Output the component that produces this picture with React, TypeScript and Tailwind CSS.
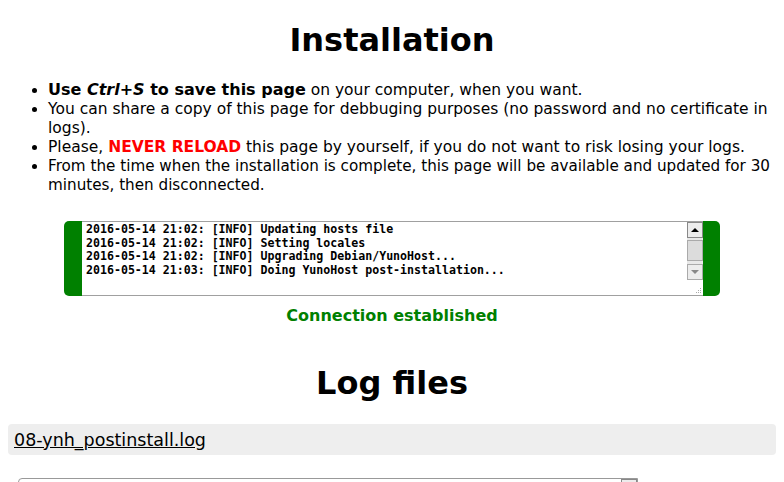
const LOG_LINES = [
  "2016-05-14 21:02: [INFO] Updating hosts file",
  "2016-05-14 21:02: [INFO] Setting locales",
  "2016-05-14 21:02: [INFO] Upgrading Debian/YunoHost...",
  "2016-05-14 21:03: [INFO] Doing YunoHost post-installation...",
];

function Scrollbar({ thumb = true }: { thumb?: boolean }) {
  return (
    <div className="flex h-full w-[16px] flex-col bg-[#e8e8e8]">
      <div className="flex h-[16px] items-center justify-center border border-[#888] bg-[#ececec]">
        <span className="h-0 w-0 border-x-[4px] border-b-[4px] border-x-transparent border-b-black" />
      </div>
      {thumb && (
        <div className="mt-[2px] h-[21px] border border-[#aaa] bg-[#dcdcdc]" />
      )}
      <div className="flex-1" />
      <div className="flex h-[16px] items-center justify-center border border-[#aaa] bg-[#ececec]">
        <span className="h-0 w-0 border-x-[4px] border-t-[4px] border-x-transparent border-t-[#888]" />
      </div>
    </div>
  );
}

export default function App() {
  return (
    <div className="min-h-screen bg-white px-2 font-['DejaVu_Sans',sans-serif] text-black">
      {/* installation */}
      <h1 className="pt-[22px] text-center text-[32px] font-bold leading-[37px]">
        Installation
      </h1>

      <ul className="mt-[21px] list-disc pl-[40px] text-[15.5px] leading-[19px]">
        <li>
          <b className="text-[16px]">
            Use <i>Ctrl+S</i> to save this page
          </b>{" "}
          on your computer, when you want.
        </li>
        <li>
          You can share a copy of this page for debbuging purposes (no password
          and no certificate in logs).
        </li>
        <li>
          Please, <b className="text-[#ff0000]">NEVER RELOAD</b> this page by
          yourself, if you do not want to risk losing your logs.
        </li>
        <li className="text-[15.2px]">
          From the time when the installation is complete, this page will be
          available and updated for 30 minutes, then disconnected.
        </li>
      </ul>

      {/* live log */}
      <div className="mx-auto mt-[26px] flex h-[75px] w-[656px] rounded-[5px] bg-[#008000] pl-[18px] pr-[17px]">
        <div className="flex flex-1 border-y border-[#a0a0a0] bg-white">
          <div className="flex-1 overflow-hidden pl-[4px] font-['DejaVu_Sans_Mono',monospace] text-[11.6px] font-bold leading-[13.7px]">
            <div className="mt-[1px]">
              {LOG_LINES.map((l) => (
                <div key={l} className="whitespace-pre">
                  {l}
                </div>
              ))}
            </div>
          </div>
          <div className="flex flex-col">
            <div className="h-[58px]">
              <Scrollbar />
            </div>
            <div className="relative flex-1">
              <div className="absolute bottom-[2px] right-[2px] grid grid-cols-3 gap-[1px]">
                {[0, 0, 1, 0, 1, 1, 1, 1, 1].map((v, i) => (
                  <span
                    key={i}
                    className={v ? "h-[1px] w-[1px] bg-[#aaa]" : "h-[1px] w-[1px]"}
                  />
                ))}
              </div>
            </div>
          </div>
        </div>
      </div>

      <p className="mt-[10px] text-center text-[16px] font-bold leading-[19px] text-[#008000]">
        Connection established
      </p>

      {/* log files */}
      <h1 className="mt-[40px] text-center text-[32px] font-bold leading-[37px]">
        Log files
      </h1>

      <div className="mt-[22px] flex h-[31px] items-center rounded-[4px] bg-[#eeeeee] px-[6px]">
        <a href="#" className="text-[17.5px] leading-[20px] text-black underline">
          08-ynh_postinstall.log
        </a>
      </div>

      <div className="ml-[10px] mt-[23px] flex h-[120px] w-[620px] rounded-tl-[4px] border border-[#999] bg-white">
        <div className="flex-1" />
        <Scrollbar thumb={false} />
      </div>
    </div>
  );
}
